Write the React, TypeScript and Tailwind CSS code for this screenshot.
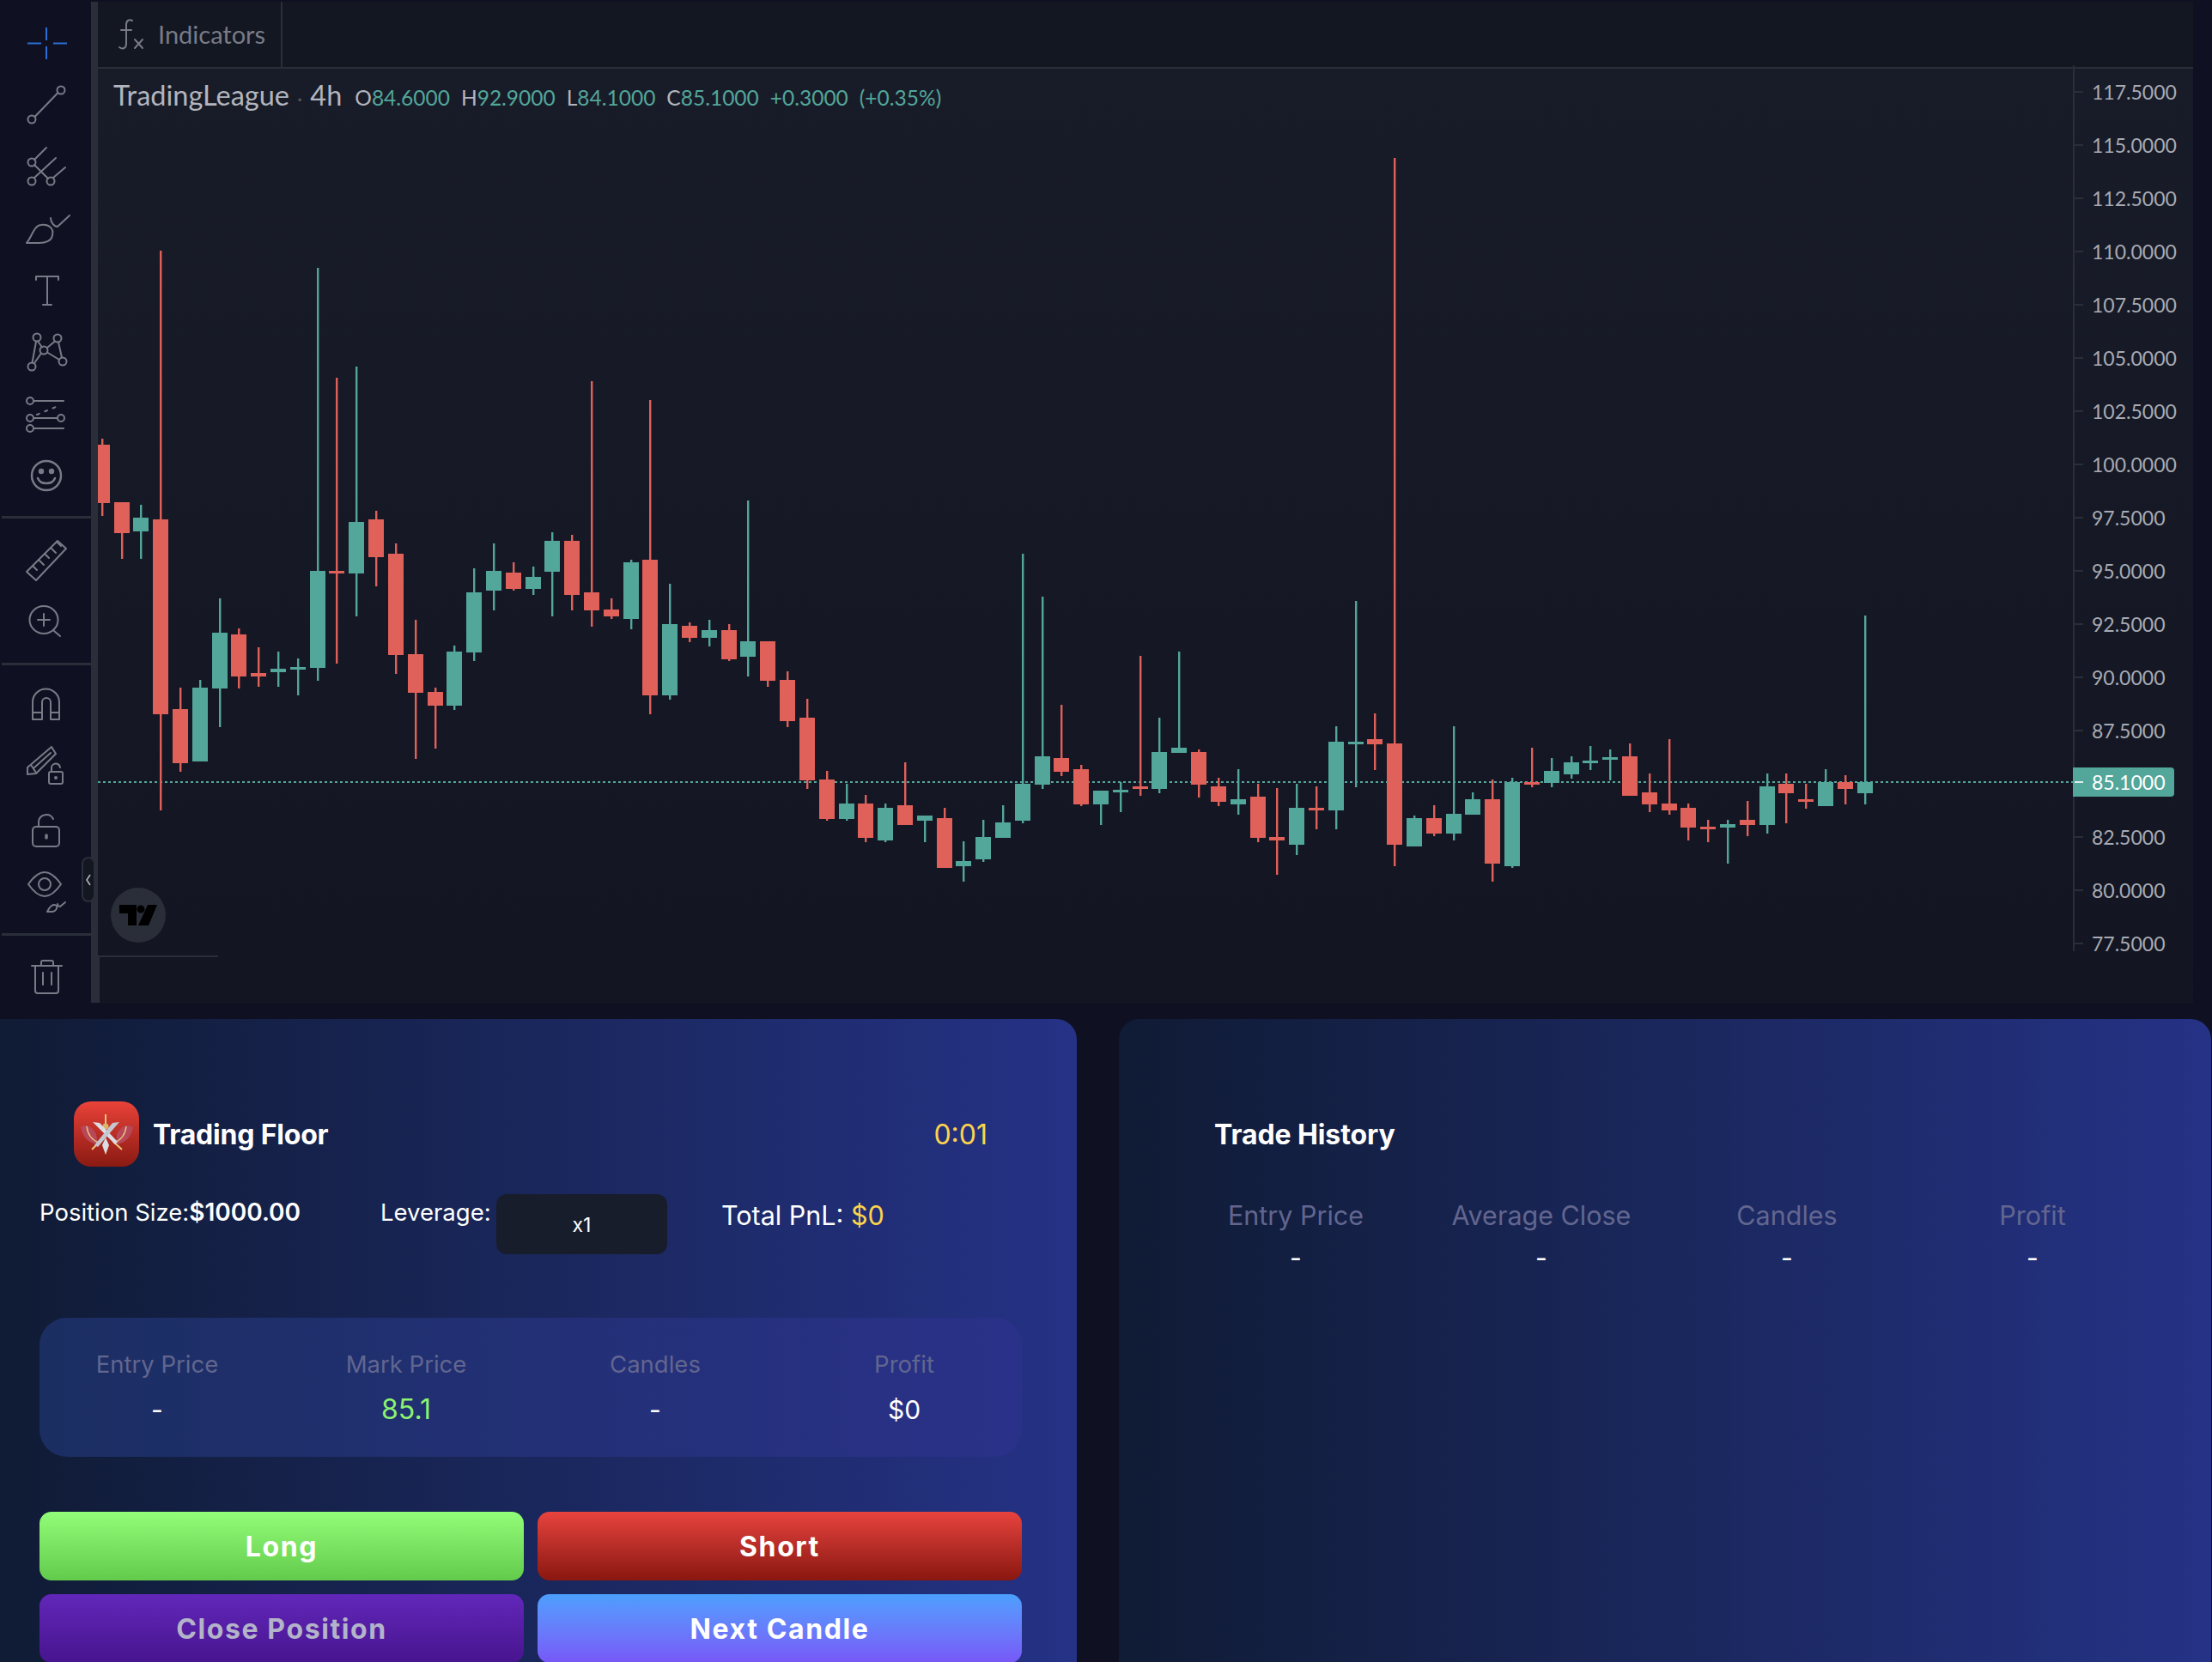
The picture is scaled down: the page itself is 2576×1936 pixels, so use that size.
import React from "react";

type Candle = [string, number, number, number, number];

const R = "#e0605a";
const G = "#53a69a";

// colour, wick top, body top, body bottom, wick bottom
const candles: Candle[] = [
  [R, 511, 518, 586, 601], [R, 585, 585, 621, 651], [G, 588, 603, 619, 651], [R, 292, 605, 832, 944],
  [R, 801, 826, 889, 899], [G, 792, 801, 887, 887], [G, 697, 737, 802, 847], [R, 732, 739, 788, 802],
  [R, 754, 784, 788, 800], [G, 759, 779, 783, 800], [G, 767, 777, 780, 810], [G, 312, 665, 778, 793],
  [R, 440, 665, 668, 773], [G, 427, 608, 668, 718], [R, 595, 605, 649, 683], [R, 633, 645, 763, 785],
  [R, 722, 762, 807, 884], [R, 801, 806, 822, 872], [G, 752, 759, 822, 827], [G, 662, 690, 760, 770],
  [G, 633, 665, 688, 711], [R, 655, 667, 686, 688], [G, 660, 672, 686, 693], [G, 620, 630, 666, 718],
  [R, 623, 630, 693, 711], [R, 444, 690, 711, 730], [R, 697, 710, 718, 721], [G, 652, 655, 721, 733],
  [R, 466, 652, 810, 832], [G, 680, 727, 810, 815], [R, 725, 729, 743, 748], [G, 722, 734, 743, 753],
  [R, 727, 734, 768, 770], [G, 583, 747, 765, 788], [R, 747, 747, 793, 800], [R, 782, 792, 840, 847],
  [R, 814, 836, 909, 919], [R, 898, 908, 954, 956], [G, 913, 936, 954, 956], [R, 926, 936, 976, 981],
  [G, 936, 941, 979, 981], [R, 888, 938, 961, 961], [G, 950, 950, 956, 981], [R, 941, 953, 1011, 1011],
  [G, 980, 1003, 1009, 1027], [G, 955, 975, 1001, 1004], [G, 938, 958, 976, 976], [G, 645, 913, 956, 959],
  [G, 695, 881, 914, 919], [R, 821, 883, 899, 904], [R, 891, 896, 937, 939], [G, 921, 921, 937, 961],
  [G, 911, 920, 923, 946], [R, 764, 916, 919, 927], [G, 836, 876, 919, 924], [G, 759, 871, 877, 877],
  [R, 873, 876, 914, 929], [R, 906, 916, 934, 939], [G, 896, 931, 937, 949], [R, 913, 928, 976, 981],
  [R, 918, 975, 979, 1019], [G, 913, 941, 984, 996], [R, 916, 941, 944, 966], [G, 846, 864, 944, 966],
  [G, 700, 864, 867, 917], [R, 831, 861, 867, 897], [R, 184, 866, 984, 1009], [G, 950, 953, 986, 986],
  [R, 938, 953, 971, 974], [G, 846, 948, 971, 979], [G, 923, 931, 949, 949], [R, 908, 931, 1006, 1027],
  [G, 906, 911, 1009, 1011], [R, 871, 911, 914, 917], [G, 883, 898, 912, 917], [G, 881, 888, 902, 907],
  [G, 869, 886, 889, 897], [G, 873, 882, 885, 909], [R, 866, 881, 927, 927], [R, 901, 923, 937, 946],
  [R, 861, 936, 944, 949], [R, 936, 941, 964, 979], [R, 955, 963, 966, 981], [G, 955, 960, 964, 1006],
  [R, 933, 955, 961, 974], [G, 901, 916, 961, 971], [R, 901, 913, 924, 959], [R, 913, 931, 934, 942],
  [G, 896, 911, 939, 939], [R, 903, 911, 919, 937], [G, 717, 911, 924, 937],
];

// the 85.0000 row stays empty, the last price badge sits there
const prices = [
  "117.5000", "115.0000", "112.5000", "110.0000", "107.5000", "105.0000", "102.5000", "100.0000", "97.5000",
  "95.0000", "92.5000", "90.0000", "87.5000", "", "82.5000", "80.0000", "77.5000",
];

function Ico({ children, blue }: { children: React.ReactNode; blue?: boolean }) {
  return (
    <svg
      width="64"
      height="64"
      viewBox="0 0 64 64"
      fill="none"
      stroke={blue ? "#2a6fd6" : "#787b86"}
      strokeWidth="2"
      strokeLinecap="round"
      strokeLinejoin="round"
    >
      {children}
    </svg>
  );
}

const topTools = [
  <Ico blue>
    <path d="M32 14v15M32 36v15M10 32.5h16M40 32.5h16" strokeLinecap="butt" />
  </Ico>,
  <Ico>
    <circle cx="15" cy="49" r="4.5" />
    <circle cx="49" cy="15" r="4.5" />
    <path d="M18.5 46 45.5 18" />
  </Ico>,
  <Ico>
    <circle cx="15" cy="27" r="4.5" />
    <circle cx="15" cy="49" r="4.5" />
    <circle cx="37" cy="49" r="4.5" />
    <path d="M18 24 32 10M18 45 43 22M40 45 54 33M18 30 34 46" />
  </Ico>,
  <Ico>
    <path d="M9 49C15 42 18 28 26 28c9-1 15 4 13 12-1 7-9 9-15 9z" />
    <path d="M37 20c0 5 4 10 8 10L59 17" />
  </Ico>,
  <Ico>
    <path d="M20 20v-4h26v4M33 16v33M28 49h10" />
  </Ico>,
  <Ico>
    <circle cx="21" cy="15" r="4.5" />
    <circle cx="45" cy="16" r="4.5" />
    <circle cx="29" cy="30" r="4.5" />
    <circle cx="15" cy="49" r="4.5" />
    <circle cx="51" cy="43" r="4.5" />
    <path d="M20 20 15.5 44.5M18 45 26 33.5M22 19.5 27 26.5M33 27 42 19.5M46 20.5 50 38.5M33 32.5 47 41" />
  </Ico>,
  <Ico>
    <circle cx="13" cy="17" r="4" />
    <circle cx="13" cy="37" r="4" />
    <circle cx="49" cy="37" r="4" />
    <circle cx="13" cy="49" r="4" />
    <path d="M17 17h35M17 37h28M17 49h35" />
    <path d="M21 33l27-11" strokeDasharray="3 7" />
  </Ico>,
  <Ico>
    <circle cx="32" cy="32" r="17" strokeWidth="2.5" />
    <circle cx="26" cy="27" r="2.2" fill="#787b86" />
    <circle cx="38" cy="27" r="2.2" fill="#787b86" />
    <path d="M22 35c3 8 17 8 20 0" strokeWidth="2.5" />
  </Ico>,
];

const midTools = [
  <Ico>
    <path d="M9 45 45 9 55 18 20 55z" />
    <path d="M16 38l5 5M23 31l6 6M30 24l5 5M37 17l6 6M44 10l5 5" />
  </Ico>,
  <Ico>
    <ellipse cx="29" cy="31" rx="16.5" ry="16" />
    <path d="M29 24v14M22 31h14M41 44l7 6" />
  </Ico>,
];

const lowTools = [
  <Ico>
    <path d="M16 50V30a15.5 15.5 0 0 1 31 0V50H37V30a5 5 0 0 0-10 0V50z" />
    <path d="M16 42h11M37 42h10" />
  </Ico>,
  <Ico>
    <path d="M10 34 38 10l5 8-23 23-10 1z" />
    <path d="M14 31l6 9M18 34l19-17" />
    <rect x="35" y="39" width="16" height="14" rx="2" />
    <path d="M38 39v-4a5 5 0 0 1 10-1" />
    <circle cx="43" cy="46" r="1" fill="#787b86" />
  </Ico>,
  <Ico>
    <rect x="16" y="31" width="31" height="23" rx="4" />
    <path d="M23 31v-6a9 9 0 0 1 17-3" />
    <path d="M32 41v3" strokeWidth="3.5" />
  </Ico>,
  <Ico>
    <path d="M11 26C18 16 24 12 30 12s12 4 19 14c-7 10-13 14-19 14S18 36 11 26z" />
    <circle cx="30" cy="26" r="7" />
    <path d="M33 58c2-4 5-8 8-8s4 2 3 4c-1 3-4 4-6 4zM45 49c0 2 2 3 3 3l6-5" />
  </Ico>,
];

function Toolbar() {
  return (
    <div className="w-[104px] shrink-0 pt-[12px] overflow-hidden">
      {topTools.map((icon, i) => (
        <div key={i} className="h-[72px] flex items-center justify-center">{icon}</div>
      ))}
      <div className="mt-[11px] h-[3px] bg-[#2a2e39]" />
      <div className="mt-[14px]">
        {midTools.map((icon, i) => (
          <div key={i} className="h-[70px] flex items-center justify-center">{icon}</div>
        ))}
      </div>
      <div className="mt-[14px] h-[3px] bg-[#2a2e39]" />
      <div className="mt-[9px]">
        {lowTools.map((icon, i) => (
          <div key={i} className="h-[72px] flex items-center justify-center">{icon}</div>
        ))}
      </div>
      <div className="mt-[15px] h-[3px] bg-[#2a2e39]" />
      <div className="mt-[15px] flex justify-center">
        <Ico>
          <path d="M15 20h35M26 20v-4a2 2 0 0 1 2-2h10a2 2 0 0 1 2 2v4M19 20v29a3 3 0 0 0 3 3h21a3 3 0 0 0 3-3V20M28 28v14M38 28v14" />
        </Ico>
      </div>
    </div>
  );
}

function Plot() {
  return (
    <svg className="absolute inset-0" width="2300" height="1088" viewBox="114 80 2300 1088">
      <line x1="114" y1="911" x2="2414" y2="911" stroke={G} strokeWidth="2" strokeDasharray="3 3" />
      {candles.map(([c, t, bt, bb, b], i) => {
        const x = Math.round(118.75 + i * 22.81);
        return (
          <g key={i} fill={c}>
            <rect x={x - 1} y={t} width="2.4" height={b - t} />
            <rect x={x - 9} y={bt} width="18" height={Math.max(bb - bt, 3)} />
          </g>
        );
      })}
    </svg>
  );
}

function Num({ children }: { children: React.ReactNode }) {
  return <span className="text-[#53a69a]">{children}</span>;
}

function Chart() {
  return (
    <div className="h-[1168px] w-[2554px] pt-[2px] pl-[2px] flex font-['Lato',sans-serif]">
      <Toolbar />
      <div className="w-[8px] shrink-0 bg-[#2a2e39]" />
      <div className="flex-1 flex flex-col">
        {/* indicators bar */}
        <div className="h-[78px] shrink-0 bg-[#131722] border-b-2 border-[#2a2e39] flex">
          <div className="w-[215px] border-r-2 border-[#2a2e39] flex items-center pl-[23px] gap-[15px]">
            <svg width="32" height="40" viewBox="0 0 32 40" fill="none" stroke="#787b86" strokeWidth="2" strokeLinecap="round">
              <path d="M17 4c-4-2-7 0-7 5v22c0 5-4 7-8 4M4 15h12M20 26l9 10M29 26l-9 10" />
            </svg>
            <span className="text-[29px] text-[#787b86]">Indicators</span>
          </div>
        </div>

        <div className="flex-1 flex bg-linear-to-b from-[#181c28] to-[#131622]">
          <div className="relative w-[2300px] shrink-0 overflow-hidden">
            <Plot />
            <div className="absolute left-[18px] top-[7px] flex items-baseline text-[#b2b5be] whitespace-nowrap">
              <span className="text-[32.5px]">TradingLeague</span>
              <span className="text-[24px] mx-[9px] text-[#555]">·</span>
              <span className="text-[32.5px]">4h</span>
              <span className="text-[24.5px] ml-[15px] flex gap-[13px]">
                <span>O<Num>84.6000</Num></span>
                <span>H<Num>92.9000</Num></span>
                <span>L<Num>84.1000</Num></span>
                <span>C<Num>85.1000</Num></span>
                <Num>+0.3000</Num>
                <Num>(+0.35%)</Num>
              </span>
            </div>
            {/* tradingview mark */}
            <div className="absolute left-[15px] top-[954px] w-[64px] h-[64px] rounded-full bg-[#2a2e39] flex items-center justify-center">
              <svg width="44" height="24" viewBox="0 0 44 24" fill="#000">
                <path d="M0 0h20v24H10V10H0z" />
                <circle cx="25" cy="5" r="4.5" />
                <path d="M33 0h11L34 24H22z" />
              </svg>
            </div>
            <div className="absolute left-0 top-[1033px] w-[140px] h-[2px] bg-[#2a2e39]" />
            <div className="absolute left-0 top-[1035px] w-[2px] h-[53px] bg-[#2a2e39]" />
          </div>

          {/* price scale */}
          <div className="relative flex-1">
            <div className="w-full h-[1032px] border-l-2 border-[#2a2e39]">
              <div className="-mt-[4px]">
                {prices.map((p, i) => (
                  <div key={i} className="h-[62px] flex items-center gap-[10px] text-[23px] text-[#a8aab3]">
                    <div className="w-[10px] h-[2px] bg-[#2a2e39]" />
                    <span>{p}</span>
                  </div>
                ))}
              </div>
            </div>
            <div className="absolute left-0 top-[814px] w-[118px] h-[34px] rounded-r-[4px] bg-[#53a69a] flex items-center gap-[10px] pl-[2px] text-[23px] text-white">
              <div className="w-[10px] h-[2px] bg-white/80" />
              <span>85.1000</span>
            </div>
          </div>
        </div>
      </div>

      {/* collapse handle */}
      <div className="absolute left-[95px] top-[998px] w-[16px] h-[53px] rounded-[8px] bg-[#131722] border-2 border-[#2a2e39] flex items-center justify-center">
        <svg width="8" height="16" viewBox="0 0 8 16" fill="none" stroke="#b2b5be" strokeWidth="1.6">
          <path d="M6 2 2 8l4 6" />
        </svg>
      </div>
    </div>
  );
}

function Crest() {
  return (
    <div className="w-[76px] h-[76px] rounded-[20px] bg-linear-to-b from-[#ea4239] to-[#8a1a12]">
      <svg width="76" height="76" viewBox="0 0 76 76">
        {/* wings */}
        <path d="M26 38C20 28 15 26 8 30c2 10 8 19 20 20z" fill="#b8475a" />
        <path d="M50 38c6-10 11-12 19-8-2 10-8 19-20 20z" fill="#b8475a" />
        <path d="M15 29c1 9 6 16 14 19M61 29c-1 9-6 16-14 19" stroke="#e8c878" strokeWidth="1.4" fill="none" />
        {/* top sword and guards */}
        <path d="M37 15v13M21 56 30 47M56 56 46 47" stroke="#e8c878" strokeWidth="2" />
        <circle cx="37" cy="29" r="3.5" fill="#d9b566" />
        {/* blades */}
        <path d="M22 24l8 1 21 22-3 3z" fill="#dcdde3" />
        <path d="M53 24l-8 1-21 26 4 2z" fill="#c4c6d0" />
        <path d="M37 42l-4 9 4 11 4-11z" fill="#dcdde3" />
      </svg>
    </div>
  );
}

function Stat({ label, value, color }: { label: string; value: string; color?: string }) {
  return (
    <div className="flex flex-col items-center">
      <span className="text-[27.5px] leading-[40px] text-[#62668f]">{label}</span>
      <span className={`leading-[40px] mt-[13px] ${color ?? "text-white text-[30px]"}`}>{value}</span>
    </div>
  );
}

function TradingFloor() {
  return (
    <div className="w-[1254px] shrink-0 h-full rounded-[24px] rounded-l-none bg-linear-to-r from-[#101b35] to-[#253286] pt-[96px] text-white">
      <div className="pl-[86px] pr-[104px] flex items-center justify-between">
        <div className="flex items-center gap-[16px]">
          <Crest />
          <span className="text-[32px] font-bold tracking-[-0.2px] mt-[2px]">Trading Floor</span>
        </div>
        <span className="text-[32px] text-[#fcd34d] mt-[2px]">0:01</span>
      </div>

      <div className="mt-[32px] pl-[46px] flex items-start">
        <span className="text-[27.5px] leading-[40px] w-[397px] pt-[1px]">
          Position Size:<span className="text-[28px] font-semibold">$1000.00</span>
        </span>
        <span className="text-[27.5px] leading-[40px] w-[135px] pt-[1px]">Leverage:</span>
        <div className="w-[199px] h-[70px] rounded-[12px] bg-[#181d2c] flex items-center justify-center text-[23px] pt-[2px]">x1</div>
        <span className="ml-[63px] mt-[5px] text-[30.5px] leading-[40px]">
          Total PnL: <span className="text-[#fcd34d]">$0</span>
        </span>
      </div>

      <div className="mt-[74px] ml-[46px] mr-[64px] h-[162px] rounded-[32px] bg-linear-to-r from-[#1b2e62] to-[#2a3189] px-[16px] pt-[34px] grid grid-cols-4 gap-[48px]">
        <Stat label="Entry Price" value="-" />
        <Stat label="Mark Price" value="85.1" color="text-[#8cf36f] text-[32px]" />
        <Stat label="Candles" value="-" />
        <Stat label="Profit" value="$0" />
      </div>

      <div className="mt-[64px] ml-[46px] mr-[64px] grid grid-cols-2 gap-x-[16px] gap-y-[16px] text-[32px] font-bold tracking-[1.6px]">
        <button className="h-[80px] pt-[2px] rounded-[14px] bg-linear-to-b from-[#92fd78] to-[#63cb4c]">Long</button>
        <button className="h-[80px] pt-[2px] rounded-[14px] bg-linear-to-b from-[#e8433e] to-[#8a1710]">Short</button>
        <button className="h-[80px] pt-[2px] rounded-[14px] bg-linear-to-b from-[#6227ba] to-[#47148e] text-[#b3b3c9]">Close Position</button>
        <button className="h-[80px] pt-[2px] rounded-[14px] bg-linear-to-b from-[#4b9ffe] to-[#7657f7]">Next Candle</button>
      </div>
    </div>
  );
}

function TradeHistory() {
  return (
    <div className="flex-1 h-full rounded-[24px] bg-linear-to-r from-[#101b35] to-[#253286] pt-[115px] text-white">
      <div className="pl-[111px] text-[32px] leading-[40px] font-bold tracking-[-0.1px]">Trade History</div>
      <div className="mt-[54px] ml-[87px] w-[1096px] grid grid-cols-4 gap-[48px]">
        {["Entry Price", "Average Close", "Candles", "Profit"].map((l) => (
          <div key={l} className="flex flex-col items-center">
            <span className="text-[30.5px] leading-[40px] text-[#62668f]">{l}</span>
            <span className="text-[30px] leading-[40px] mt-[9px]">-</span>
          </div>
        ))}
      </div>
    </div>
  );
}

export default function App() {
  return (
    <div className="relative h-[1936px] w-[2576px] overflow-hidden bg-[#0f1123] font-['Inter',sans-serif]">
      <Chart />
      <div className="mt-[19px] h-[800px] flex gap-[49px] pr-[1px]">
        <TradingFloor />
        <TradeHistory />
      </div>
    </div>
  );
}
